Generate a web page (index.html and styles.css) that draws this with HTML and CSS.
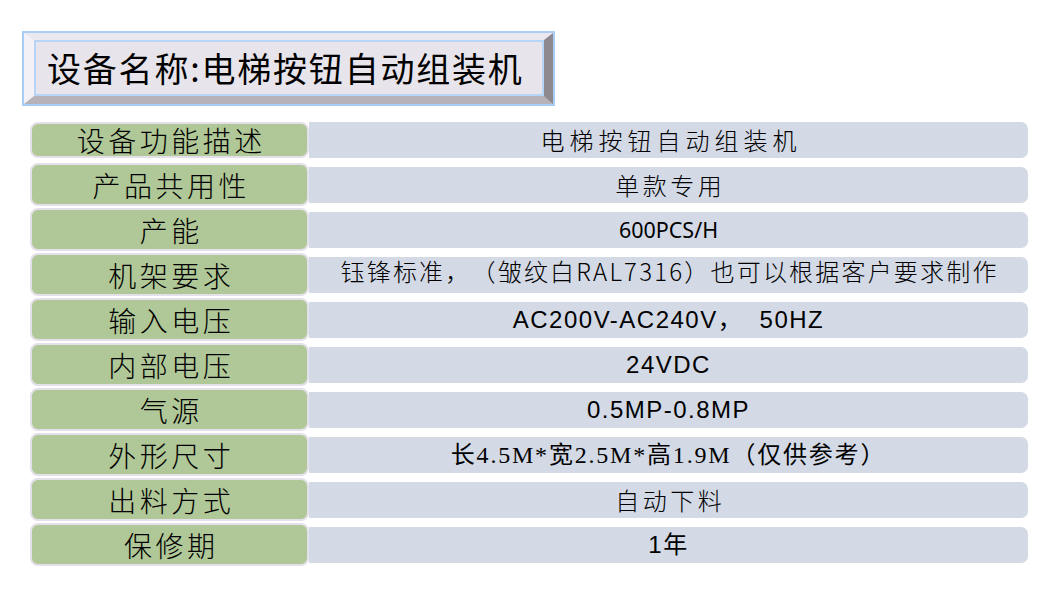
FILE: index.html
```html
<!DOCTYPE html>
<html lang="zh-CN">
<head>
<meta charset="utf-8">
<title>设备名称:电梯按钮自动组装机</title>
<link rel="stylesheet" href="styles.css">
</head>
<body>
<div class="page">
  <div class="title">
    <div class="title-face">设备名称:电梯按钮自动组装机</div>
  </div>
  <div class="spec">
    <div class="row first">
      <div class="label">设备功能描述</div>
      <div class="value cjk wide">电梯按钮自动组装机</div>
    </div>
    <div class="row">
      <div class="label">产品共用性</div>
      <div class="value cjk mid">单款专用</div>
    </div>
    <div class="row">
      <div class="label">产能</div>
      <div class="value sans">600PCS/H</div>
    </div>
    <div class="row">
      <div class="label">机架要求</div>
      <div class="value cjk long">钰锋标准，（皱纹白RAL7316）也可以根据客户要求制作</div>
    </div>
    <div class="row">
      <div class="label">输入电压</div>
      <div class="value arial">AC200V-AC240V，&nbsp; 50HZ</div>
    </div>
    <div class="row">
      <div class="label">内部电压</div>
      <div class="value arial">24VDC</div>
    </div>
    <div class="row">
      <div class="label">气源</div>
      <div class="value arial">0.5MP-0.8MP</div>
    </div>
    <div class="row">
      <div class="label">外形尺寸</div>
      <div class="value serif">长4.5M*宽2.5M*高1.9M（仅供参考）</div>
    </div>
    <div class="row">
      <div class="label">出料方式</div>
      <div class="value cjk mid">自动下料</div>
    </div>
    <div class="row">
      <div class="label">保修期</div>
      <div class="value arial">1年</div>
    </div>
  </div>
</div>
</body>
</html>
```
FILE: styles.css
```css
html, body {
  margin: 0;
  padding: 0;
  background: #ffffff;
}

body {
  font-family: "Noto Sans CJK SC", "Noto Sans", sans-serif;
  font-weight: 300;
  color: #000;
  text-spacing-trim: space-all;
}

.page {
  width: 1046px;
  height: 594px;
  padding: 33px 0 0 24px;
  box-sizing: border-box;
}

.title {
  width: 529px;
  height: 71px;
  box-sizing: border-box;
  border-style: solid;
  border-width: 7px 9px 8px 10px;
  border-color: #ebe7ee #8d898f #b7b1b9 #f3f1f6;
  box-shadow: 0 0 0 2px #a9cef6;
}

.title-face {
  height: 100%;
  box-sizing: border-box;
  border: 2px solid #b7d5f6;
  background: #e8e4eb;
  display: flex;
  align-items: center;
  padding-left: 11px;
  font-size: 34px;
  font-weight: 400;
  letter-spacing: 1.8px;
  line-height: 1;
  white-space: nowrap;
}

.spec {
  margin: 14px 0 0 6px;
  width: 998px;
  display: flex;
  flex-direction: column;
}

.row {
  height: 45px;
  display: grid;
  grid-template-columns: 279px 1fr;
  align-items: start;
}

.label {
  height: 43px;
  box-sizing: border-box;
  background: #b0c797;
  border: 2.5px solid #e4e0ea;
  border-radius: 8px;
  display: flex;
  align-items: center;
  justify-content: center;
  font-size: 28px;
  letter-spacing: 3.5px;
  padding-left: 3.5px;
  line-height: 1;
  white-space: nowrap;
}

.row.first .label {
  height: 36px;
  margin-top: 4px;
}

.value {
  margin-top: 4px;
  height: 36px;
  background: #d3d9e5;
  border-radius: 0 7px 7px 0;
  display: flex;
  align-items: center;
  justify-content: center;
  line-height: 1;
  white-space: nowrap;
}

.value.cjk {
  font-size: 24px;
}

.value.wide {
  letter-spacing: 5px;
  padding-left: 5px;
}

.value.mid {
  letter-spacing: 3.5px;
  padding-left: 3.5px;
}

.value.long {
  letter-spacing: 2.2px;
  padding-left: 2.2px;
  align-items: flex-start;
  padding-top: 2px;
  box-sizing: border-box;
}

.value.sans {
  font-family: "Noto Sans", "Noto Sans CJK SC", sans-serif;
  font-weight: 400;
  font-size: 21.5px;
}

.value.arial {
  font-family: "Liberation Sans", "Noto Sans CJK SC", sans-serif;
  font-weight: 400;
  font-size: 24px;
  letter-spacing: 1.5px;
}

.value.serif {
  font-family: "Liberation Serif", "Noto Sans CJK SC", serif;
  font-weight: 400;
  font-size: 24px;
  letter-spacing: 1.8px;
}
```
